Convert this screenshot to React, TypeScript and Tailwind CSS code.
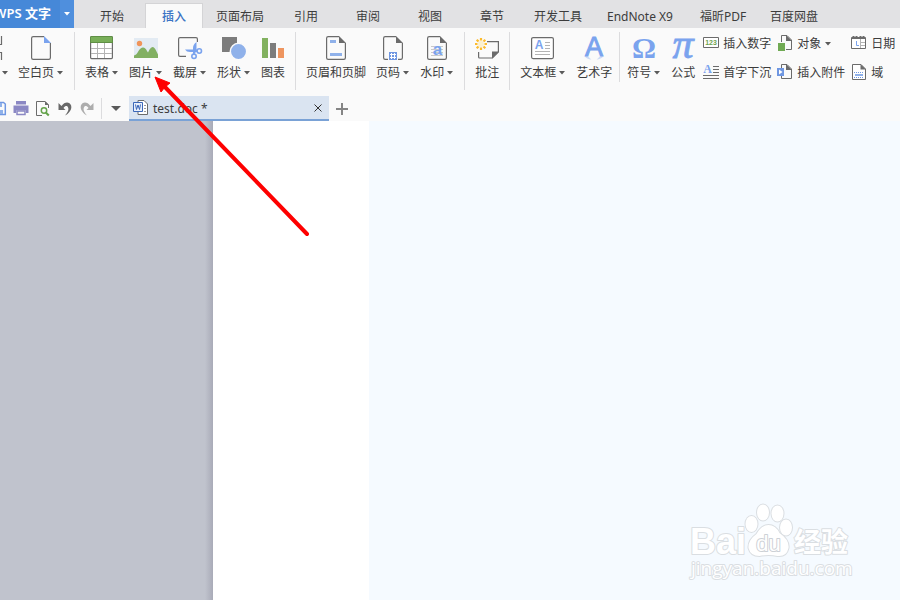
import React from 'react';

const FONT = 'font-["Noto_Sans","Noto_Sans_CJK_SC",sans-serif]';

function Caret({ className = '' }: { className?: string }) {
  return (
    <svg width="6" height="4" viewBox="0 0 6 4" className={className} aria-hidden="true">
      <path d="M0 0h6L3 3.5z" fill="#5a5a5a" />
    </svg>
  );
}

function Icon({ size = 24, children }: { size?: number; children: React.ReactNode }) {
  return (
    <svg width={size} height={size} viewBox={`0 0 ${size} ${size}`} fill="none" className="shrink-0 overflow-visible" aria-hidden="true">
      {children}
    </svg>
  );
}

// Page outline with a folded corner, shared by several icons
function PageShape({ fold = '#6b6b6b' }: { fold?: string }) {
  return (
    <>
      <path d="M15 .6H4.2Q2.6 .6 2.6 2.2v19.6q0 1.6 1.6 1.6h15.6q1.6 0 1.6-1.6V7" stroke="#6b6b6b" strokeWidth="1.2" fill="#fafafa" />
      <path d="M15 0l7 7h-7z" fill={fold} />
    </>
  );
}

const icons = {
  blank: (
    <Icon>
      <PageShape fold="#7aa3ee" />
    </Icon>
  ),
  table: (
    <Icon>
      <rect x=".6" y=".6" width="21.8" height="22" rx="1" fill="#fff" stroke="#6b6b6b" strokeWidth="1.2" />
      <path d="M1 12.5h21M1 17.5h21M7.5 7v15M14.5 7v15" stroke="#b4b4b4" />
      <path d="M0 7V1.5Q0 0 1.5 0h20Q23 0 23 1.5V7z" fill="#5f8f45" />
      <path d="M1 6V1h21v5z" fill="#78ae58" />
    </Icon>
  ),
  picture: (
    <Icon>
      <path d="M0 2h24v20H0z" fill="#e3ebf3" />
      <circle cx="5.5" cy="7.5" r="2.7" fill="#f0945a" />
      <path d="M0 22v-2.500q2.500-.5 4.500-4.500 2-3.500 4.500-3.500t4 3.500l1 1.500 1.500-3q1.500-2.500 3-2.500 2 0 3.500 3.500l2 4V22z" fill="#82b062" />
    </Icon>
  ),
  screenshot: (
    <Icon>
      <path d="M8 20.400H2Q.6 20.400 .6 19V3Q.6 1.600 2 1.600h16q1.400 0 1.400 1.400v3" stroke="#6b6b6b" strokeWidth="1.200" />
      <circle cx="16" cy="20.300" r="2.200" stroke="#7aa3ee" strokeWidth="1.600" />
      <circle cx="21.300" cy="15" r="2.200" stroke="#7aa3ee" strokeWidth="1.600" />
      <path d="M19 16H12q-3.500 0-5-2.500h12zM15 18.200V12q0-3.500 3.500-6v9l-2 3z" fill="#7aa3ee" />
    </Icon>
  ),
  shapes: (
    <Icon>
      <path d="M0 1h15v15H0z" fill="#7c7c7c" />
      <circle cx="16.500" cy="15.500" r="8.200" fill="#8fb1ea" stroke="#fafafa" strokeWidth="1.500" />
    </Icon>
  ),
  chart: (
    <Icon>
      <path d="M1 2h6v20H1z" fill="#82b15f" />
      <path d="M9 7h6v15H9z" fill="#7c7c7c" />
      <path d="M17 12h6v10h-6z" fill="#ee955f" />
    </Icon>
  ),
  headerFooter: (
    <Icon>
      <PageShape />
      <path d="M6 4h6v3H6zM6 17h12v3H6z" fill="#8fb1ea" />
    </Icon>
  ),
  pageNumber: (
    <Icon>
      <PageShape />
      <path d="M7 15h10v9H7z" fill="#fafafa" />
      <path d="M8 16h8v8H8z" fill="#6f97e2" />
      <path d="M10.500 17v6M13.500 17v6M9 18.500h6M9 21.500h6" stroke="#fff" />
    </Icon>
  ),
  watermark: (
    <Icon>
      <PageShape />
      <path d="M6 10.500h12M6 13.500h12M6 16.500h12M6 19.500h12" stroke="#c9c9c9" />
      <text x="12.500" y="19" textAnchor="middle" fontSize="17" fontWeight="700" fontFamily="Liberation Sans" fill="#7aa3ee">a</text>
    </Icon>
  ),
  comment: (
    <Icon>
      <path d="M12 5.600h11.400V16l-6 6H4.500q-.9 0-.9-1v-5" stroke="#6b6b6b" strokeWidth="1.200" />
      <path d="M17 22.500V15.500h7z" fill="#6b6b6b" />
      <circle cx="6" cy="8" r="3" fill="#fbf0cf" />
      <path d="M6 2v2.500M6 11.500V14M0 8h2.500M9.500 8H12M1.700 3.700l1.800 1.800M8.500 10.500l1.800 1.800M10.300 3.700L8.500 5.500M3.500 10.500l-1.800 1.800" stroke="#fbbb2d" strokeWidth="2.200" />
    </Icon>
  ),
  textBox: (
    <Icon>
      <rect x=".6" y="1.600" width="21.800" height="21" rx="1.500" fill="#fff" stroke="#6b6b6b" strokeWidth="1.200" />
      <text x="8" y="13" textAnchor="middle" fontSize="12" fontWeight="700" fontFamily="Liberation Sans" fill="#7aa3ee">A</text>
      <path d="M14 6.500h5M14 9.500h5M14 12.500h5M4 15.500h15M4 18.500h15" stroke="#b4b4b4" />
    </Icon>
  ),
  wordArt: (
    <Icon>
      <text x="12" y="19.500" textAnchor="middle" fontSize="27" fontFamily="Liberation Sans" fill="#7aa3ee" stroke="#7aa3ee" strokeWidth=".9">A</text>
      <path d="M3 20.500h3.500q1 2 3 3-5-.5-6.500-3zM17.500 20.500H21q-1.500 2.500-6.500 3 2-1 3-3z" fill="#7aa3ee" opacity=".35" />
    </Icon>
  ),
  omega: (
    <Icon>
      <text x="12" y="22" textAnchor="middle" fontSize="30" fontWeight="700" fontFamily="Liberation Serif" fill="#7aa3ee">Ω</text>
    </Icon>
  ),
  pi: (
    <Icon>
      <text x="12" y="22" textAnchor="middle" fontSize="42" fontFamily="Liberation Serif" fontStyle="italic" fill="#7aa3ee" stroke="#7aa3ee" strokeWidth=".8">π</text>
    </Icon>
  ),
  number: (
    <Icon size={16}>
      <path d="M.5 2.500h15v10H.5z" fill="#fff" stroke="#6b6b6b" />
      <text x="8" y="10" textAnchor="middle" fontSize="7" fontWeight="700" fontFamily="Liberation Sans" fill="#6da350">123</text>
    </Icon>
  ),
  dropCap: (
    <Icon size={16}>
      <text x="4.500" y="9" textAnchor="middle" fontSize="12" fontFamily="Liberation Serif" fontWeight="700" fill="#7aa3ee">A</text>
      <path d="M10 2.500h6M10 5.500h6M10 8.500h6M0 11.500h16M0 14.500h16" stroke="#6b6b6b" />
    </Icon>
  ),
  object: (
    <Icon size={16}>
      <path d="M4.500 7V.5H10l4.500 4.500v9.500H9" stroke="#6b6b6b" />
      <path d="M9 0l6 6H9z" fill="#6b6b6b" />
      <path d="M1 8h7v8H1z" fill="#70aa54" />
    </Icon>
  ),
  attachment: (
    <Icon size={16}>
      <path d="M4.500 4V.5H10l4.500 4.500v9.500h-10V12" stroke="#6b6b6b" />
      <path d="M9 0l6 6H9z" fill="#6b6b6b" />
      <path d="M0 4h7v8H0z" fill="#6f97e2" />
      <path d="M2 5.500L5.500 8 2 10.500z" fill="#fff" />
    </Icon>
  ),
  date: (
    <Icon size={16}>
      <path d="M.5 2.500h14v11H.5z" fill="#fff" stroke="#6b6b6b" />
      <path d="M1 2h13v2H1z" fill="#6b6b6b" />
      <path d="M2.500 1v2M5.500 1v2M9.500 1v2M12.500 1v2" stroke="#6b6b6b" strokeWidth="2" />
      <path d="M5.500 6v4.500H8" stroke="#7aa3ee" />
      <path d="M9.500 4v9M10 7.500h4M10 10.500h4" stroke="#b4b4b4" />
    </Icon>
  ),
  field: (
    <Icon size={16}>
      <path d="M1.500 .5H10l4.500 4.500v10.500h-13z" fill="#fff" stroke="#6b6b6b" />
      <path d="M9.500 0L15 5.500H9.500z" fill="#6b6b6b" />
      <path d="M3 8.500h10M3 13.500h10" stroke="#6f97e2" strokeDasharray="1 1" />
      <path d="M4 10h8v2H4z" fill="#8fb1ea" />
    </Icon>
  ),
};

type IconName = keyof typeof icons;

interface Command {
  label: string;
  icon: IconName;
  menu?: boolean;
}

const tabs = [
  { label: '开始', width: 'w-[58px]' },
  { label: '插入', width: 'w-[58px]', active: true },
  { label: '页面布局', width: 'w-[66px]' },
  { label: '引用', width: 'w-[58px]' },
  { label: '审阅', width: 'w-[58px]' },
  { label: '视图', width: 'w-[58px]' },
  { label: '章节', width: 'w-[58px]' },
  { label: '开发工具', width: 'w-[66px]' },
  { label: 'EndNote X9', width: 'w-[90px]' },
  { label: '福昕PDF', width: 'w-[68px]' },
  { label: '百度网盘', width: 'w-[66px]' },
];

const groups: Command[][] = [
  [{ label: '空白页', icon: 'blank', menu: true }],
  [
    { label: '表格', icon: 'table', menu: true },
    { label: '图片', icon: 'picture', menu: true },
    { label: '截屏', icon: 'screenshot', menu: true },
    { label: '形状', icon: 'shapes', menu: true },
    { label: '图表', icon: 'chart' },
  ],
  [
    { label: '页眉和页脚', icon: 'headerFooter' },
    { label: '页码', icon: 'pageNumber', menu: true },
    { label: '水印', icon: 'watermark', menu: true },
  ],
  [{ label: '批注', icon: 'comment' }],
  [
    { label: '文本框', icon: 'textBox', menu: true },
    { label: '艺术字', icon: 'wordArt' },
  ],
];

const symbolGroup: Command[] = [
  { label: '符号', icon: 'omega', menu: true },
  { label: '公式', icon: 'pi' },
];

const smallColumns: Command[][] = [
  [{ label: '插入数字', icon: 'number' }, { label: '首字下沉', icon: 'dropCap' }],
  [{ label: '对象', icon: 'object', menu: true }, { label: '插入附件', icon: 'attachment' }],
  [{ label: '日期', icon: 'date' }, { label: '域', icon: 'field' }],
];

function LargeButton({ label, icon, menu }: Command) {
  return (
    <button type="button" className="flex shrink-0 flex-col items-center gap-[5px] px-[5px]">
      {icons[icon]}
      <span className="flex items-center text-xs leading-4 whitespace-nowrap">
        {label}
        {menu && <Caret className="mr-px ml-[3px]" />}
      </span>
    </button>
  );
}

function SmallButton({ label, icon, menu }: Command) {
  return (
    <button type="button" className="flex h-4 items-center gap-1 text-xs leading-4 whitespace-nowrap">
      {icons[icon]}
      <span className="pt-0.5">{label}</span>
      {menu && <Caret className="mt-0.5" />}
    </button>
  );
}

function TabBar() {
  return (
    <header className="flex h-7 bg-[#e2e2e4]">
      <div className="flex w-[74px] shrink-0 overflow-hidden bg-[#4f8fdd] text-white">
        <button type="button" className="flex w-[60px] items-center justify-end overflow-hidden bg-[#4688d8] pr-[9px] text-[13px] font-semibold whitespace-nowrap">
          WPS 文字
        </button>
        <button type="button" aria-label="菜单" className="flex flex-1 items-center justify-center">
          <svg width="6" height="4" viewBox="0 0 6 4"><path d="M0 0h6L3 3.500z" fill="#fff" /></svg>
        </button>
      </div>
      <nav className="flex items-end pl-[7px]">
        {tabs.map((tab) => (
          <button
            key={tab.label}
            type="button"
            className={`mx-0.5 shrink-0 text-xs whitespace-nowrap ${tab.width} ${
              tab.active
                ? 'h-[25px] border border-b-0 border-[#d4d4d6] bg-[#fafafa] pt-px font-medium text-[#3a74c4]'
                : 'h-[23px]'
            }`}
          >
            {tab.label}
          </button>
        ))}
      </nav>
    </header>
  );
}

function Ribbon() {
  return (
    <div className="flex h-[68px] items-start overflow-hidden pt-1">
      <button type="button" aria-label="分页" className="w-[13px] shrink-0 pt-1">
        <svg width="13" height="44" viewBox="0 0 13 44" fill="none">
          <path d="M0 8.500h1.500V0M0 16.500h1.500V24" stroke="#6b6b6b" strokeWidth="1.200" />
          <path d="M2 35h6l-3 3.500z" fill="#5a5a5a" />
        </svg>
      </button>
      {groups.map((group) => (
        <div key={group[0].label} className="flex">
          <div className="flex pt-1">
            {group.map((command) => (
              <LargeButton key={command.label} {...command} />
            ))}
          </div>
          {group[0].icon === 'textBox' ? (
            <div className="mx-0.5 h-[50px] w-px bg-[#dcdcde]" />
          ) : (
            <div className="mx-[5px] h-[58px] w-px bg-[#dcdcde]" />
          )}
        </div>
      ))}
      <div className="flex pt-1">
        {symbolGroup.map((command) => (
          <LargeButton key={command.label} {...command} />
        ))}
      </div>
      <div className="flex gap-1.5 pt-[3px] pl-[3px]">
        {smallColumns.map((column) => (
          <div key={column[0].label} className="flex flex-col gap-[13px]">
            {column.map((command) => (
              <SmallButton key={command.label} {...command} />
            ))}
          </div>
        ))}
      </div>
    </div>
  );
}

function QuickBar() {
  const quick = 'flex w-[22px] shrink-0 items-center justify-center';
  return (
    <div className="flex h-[25px]">
      <button type="button" aria-label="保存" className="flex w-[10px] shrink-0 items-center">
        <svg width="10" height="16" viewBox="0 0 10 16" fill="none">
          <path d="M0 1.500h3.500L5.300 3v10.500H0" stroke="#6f97e2" strokeWidth="1.500" />
          <path d="M0 2h2v4H0zM0 9h3v4H0z" fill="#8fb1ea" />
        </svg>
      </button>
      <button type="button" aria-label="打印" className={quick}>
        <Icon size={16}>
          <path d="M3 0h10v3.500H3zM.5 4.500h15v7.500H13V9.500H3V12H.5z" fill="#8b88c4" />
          <path d="M4 10h8v3.500H4z" stroke="#8b88c4" strokeWidth="1.500" />
        </Icon>
      </button>
      <button type="button" aria-label="打印预览" className={quick}>
        <Icon size={16}>
          <path d="M7 14.500H1.500V.5H10l3.500 3.500v3" stroke="#6b6b6b" />
          <path d="M10 0v4h4z" fill="#6b6b6b" />
          <circle cx="9" cy="9.500" r="2.700" stroke="#64a34b" strokeWidth="1.500" />
          <path d="M10.800 11.500l3 3" stroke="#64a34b" strokeWidth="2" />
        </Icon>
      </button>
      <button type="button" aria-label="撤销" className={quick}>
        <Icon size={16}>
          <path d="M4.500 5C7 1.500 10 .8 12.500 2.200 16 5 14.500 11 8 14.500 11 11 12.500 8 10.500 5.500 9.500 4.500 8 5 6.500 7L8.500 9h-7V2z" fill="#686868" />
        </Icon>
      </button>
      <button type="button" aria-label="恢复" className={quick}>
        <Icon size={16}>
          <path d="M11.500 5C9 1.500 6 .8 3.500 2.200 0 5 1.500 11 8 14.500 5 11 3.500 8 5.500 5.500 6.500 4.500 8 5 9.500 7L7.500 9h7V2z" fill="#adadad" />
        </Icon>
      </button>
      <div className="mt-0.5 ml-[3px] h-[21px] w-px bg-[#dcdcde]" />
      <button type="button" aria-label="自定义快速访问工具栏" className="flex w-[27px] shrink-0 items-center justify-center">
        <svg width="10" height="5" viewBox="0 0 10 5"><path d="M0 0h10L5 5z" fill="#5a5a5a" /></svg>
      </button>
      <div className="flex w-[200px] shrink-0 items-center border-b-2 border-[#7aa2d6] bg-[#dae4f1] pr-1.5 pl-1">
        <Icon size={16}>
          <path d="M5 .5h6L14.500 4V14.500H5z" fill="#fff" stroke="#6b6b6b" />
          <path d="M11 5.500h2M11 8.500h2M11 11.500h2" stroke="#9a9a9a" />
          <path d="M.5 2.500h9v9h-9z" fill="#e8effb" stroke="#3b67b8" />
          <path d="M2.500 4.500l1 5L5 5l1.500 4.500 1-5" stroke="#3b67b8" />
        </Icon>
        <span className="ml-1 flex-1 pt-0.5 text-xs">test.doc *</span>
        <button type="button" aria-label="关闭" className="p-px">
          <svg width="8" height="8" viewBox="0 0 8 8"><path d="M.5 .5l7 7M7.500 .5l-7 7" stroke="#333" /></svg>
        </button>
      </div>
      <button type="button" aria-label="新建" className="flex w-[26px] items-center justify-center">
        <svg width="12" height="12" viewBox="0 0 12 12"><path d="M6 0v12M0 6h12" stroke="#858585" strokeWidth="2" /></svg>
      </button>
    </div>
  );
}

function Watermark() {
  return (
    <svg width="166" height="82" viewBox="0 0 166 82" className="absolute right-[46px] bottom-[16px]" role="img" aria-label="Baidu 经验">
      <g fill="#fff" stroke="#dadee2" strokeWidth="2" strokeLinejoin="round" paintOrder="stroke">
        <text x="2" y="52" fontSize="36" fontWeight="700" fontFamily="Liberation Sans">Bai</text>
        <ellipse cx="63.500" cy="22" rx="6" ry="8" />
        <ellipse cx="75" cy="10.500" rx="6" ry="8" />
        <ellipse cx="89.500" cy="11.500" rx="6" ry="8" />
        <ellipse cx="98" cy="25.500" rx="6" ry="8" />
        <path d="M80.500 23q7 0 11 8 10 7 9 15-2 9-11 8-9-2-18 0-9 0-11-8-.5-8 8-14 5-9 12-9z" />
        <text x="80.500" y="49" fontSize="22" textAnchor="middle" fontFamily="Liberation Sans" stroke="#cdd1d6">du</text>
        <text x="106" y="50" fontSize="27" fontWeight="700" fontFamily="Noto Sans CJK SC">经验</text>
        <text x="3" y="73" fontSize="20" fontFamily="Open Sans, Liberation Sans" className="text-[19px]">jingyan.baidu.com</text>
      </g>
    </svg>
  );
}

export default function App() {
  return (
    <div className={`relative flex min-h-screen flex-col overflow-hidden bg-[#fafafa] text-[#3c3c3c] ${FONT}`}>
      <TabBar />
      <Ribbon />
      <QuickBar />
      <main className="relative flex flex-1 bg-[#f5faff]">
        <div className="flex w-[213px] shrink-0 justify-end bg-[#c0c3cd]">
          <div className="w-2 bg-linear-to-r from-[#c0c3cd] to-[#a9abb8]" />
        </div>
        <div className="w-[156px] shrink-0 bg-white" />
        <Watermark />
      </main>
      {/* Pointer to the picture command */}
      <svg width="160" height="165" viewBox="0 0 160 165" className="pointer-events-none absolute top-[74px] left-[152px]" aria-hidden="true">
        <path d="M12 12L155 160" stroke="#fe0000" strokeWidth="4" strokeLinecap="round" />
        <path d="M3 3l15 6-5 4-4 5z" fill="#fe0000" stroke="#fe0000" />
      </svg>
    </div>
  );
}
